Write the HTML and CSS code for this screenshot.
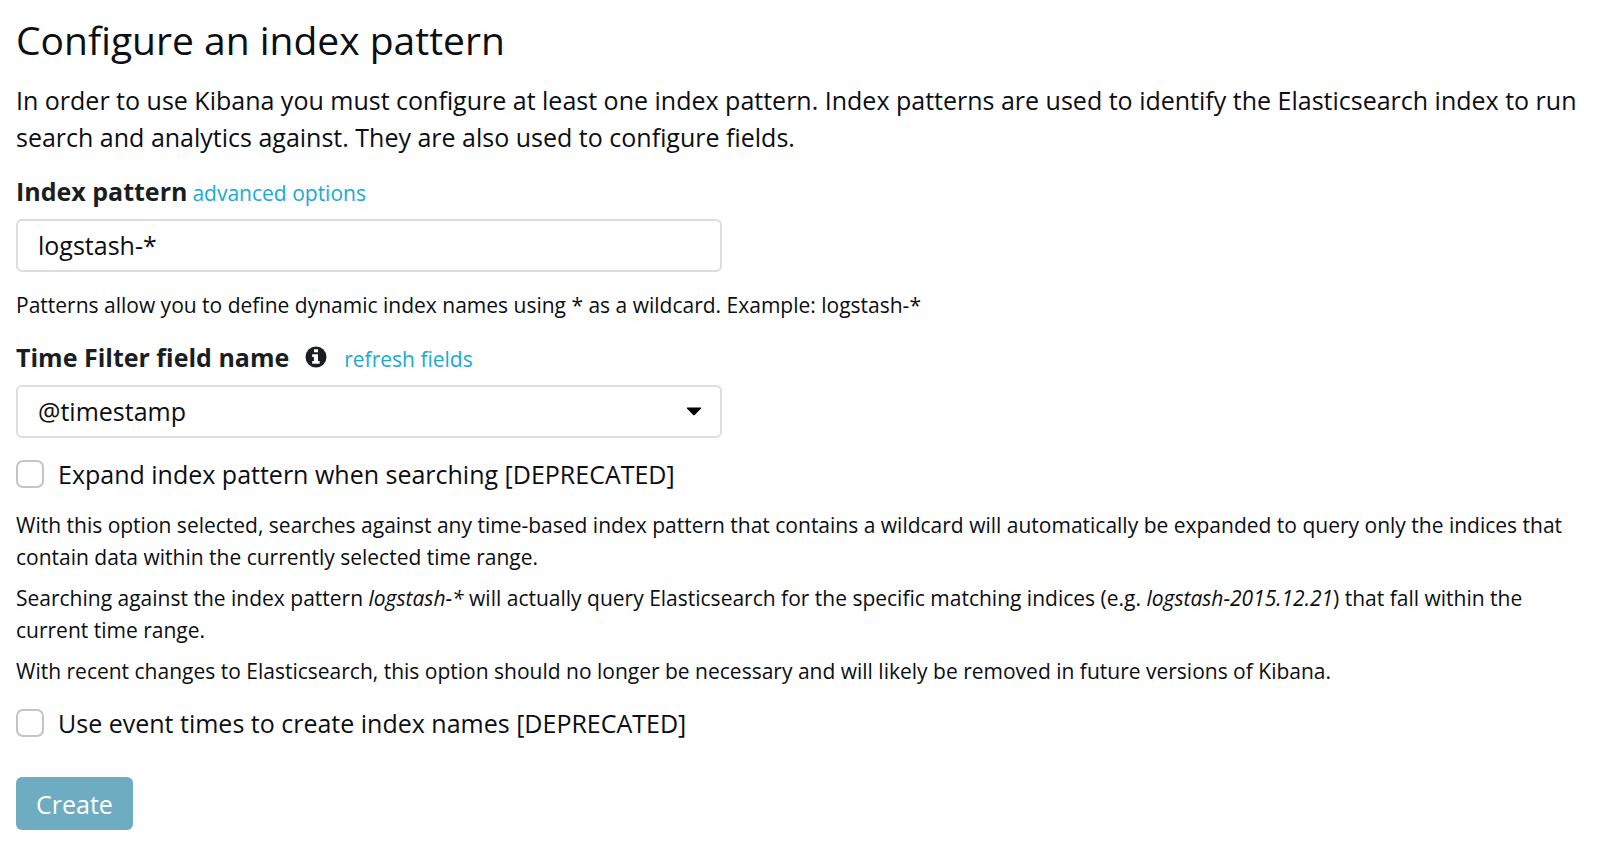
FILE: index.html
```html
<!DOCTYPE html>
<html lang="en">
<head>
<meta charset="utf-8">
<title>Configure an index pattern</title>
<link rel="stylesheet" href="styles.css">
</head>
<body>
<main class="page">
  <h1 class="title">Configure an index pattern</h1>
  <p class="intro">In order to use Kibana you must configure at least one index pattern. Index patterns are used to identify the Elasticsearch index to run search and analytics against. They are also used to configure fields.</p>
  <form class="form">
    <div class="label-row">
      <label class="label" for="pattern">Index pattern</label>
      <a class="link" href="#">advanced options</a>
    </div>
    <input class="control" id="pattern" type="text" value="logstash-*">
    <p class="help help-pattern">Patterns allow you to define dynamic index names using * as a wildcard. Example: logstash-*</p>
    <div class="label-row">
      <label class="label" for="time-field">Time Filter field name</label>
      <svg class="info" viewBox="0 0 22 22" aria-hidden="true"><circle cx="11" cy="11" r="10.5" fill="#191e23"/><path d="M9 3.2h4v3H9zM7.2 8.2H13v6.8h1.6v2.8H7.2V15h1.7v-4.1H7.2z" fill="#fff"/></svg>
      <a class="link" href="#">refresh fields</a>
    </div>
    <div class="select-wrap">
      <select class="control" id="time-field"><option>@timestamp</option></select>
      <svg class="caret" viewBox="0 0 16 9" aria-hidden="true"><path d="M1 .5h14v1L8.8 8q-.8.7-1.6 0L1 1.5z" fill="#000"/></svg>
    </div>
    <label class="check check-expand"><input class="box" type="checkbox"> Expand index pattern when searching [DEPRECATED]</label>
    <p class="help">With this option selected, searches against any time-based index pattern that contains a wildcard will automatically be expanded to query only the indices that contain data within the currently selected time range.</p>
    <p class="help">Searching against the index pattern <em>logstash-*</em> will actually query Elasticsearch for the specific matching indices (e.g. <em>logstash-2015.12.21</em>) that fall within the current time range.</p>
    <p class="help">With recent changes to Elasticsearch, this option should no longer be necessary and will likely be removed in future versions of Kibana.</p>
    <label class="check check-event"><input class="box" type="checkbox"> Use event times to create index names [DEPRECATED]</label>
    <button class="create" type="button">Create</button>
  </form>
</main>
</body>
</html>
```
FILE: styles.css
```css
* { box-sizing: border-box; }
body { margin: 0; background: #fff; color: #0b0e12; font-family: "Open Sans", sans-serif; font-size: 25px; }
.page { padding: 13px 16px 19px; }
.title { margin: 0 0 15px; font-size: 39px; font-weight: 400; line-height: 54px; }
.intro { margin: 0 0 17px; line-height: 37px; }
.form { display: flex; flex-direction: column; align-items: flex-start; }
.label-row { display: flex; align-items: baseline; height: 36px; margin-bottom: 10px; line-height: 36px; }
.label { font-size: 25px; font-weight: 700; color: #191e23; }
.link { margin-left: 5px; font-size: 21px; color: #1ba9d0; text-decoration: none; }
.control { display: block; width: 100%; max-width: 706px; height: 53px; padding: 0 20px 2px; border: 2px solid #ddd; border-radius: 6px; background: #fff; color: inherit; font: inherit; appearance: none; }
.select-wrap { position: relative; width: 100%; max-width: 706px; }
.caret { position: absolute; right: 20px; top: 22px; width: 16px; height: 9px; pointer-events: none; }
.info { align-self: center; width: 22px; height: 22px; margin: 0 12px 0 16px; }
.help { margin: 0 0 9px; font-size: 21px; line-height: 32px; }
.help-pattern { margin: 17px 0 18px; }
.check { display: flex; align-items: center; gap: 14px; height: 36px; }
.box { width: 28px; height: 28px; margin: 0; border: 2px solid #c4c4c4; border-radius: 7px; background: #fff; appearance: none; }
.check-expand { margin: 18px 0 17px; }
.check-event { margin: 9px 0 36px; }
.create { height: 53px; padding: 0 20px; border: 0; border-radius: 6px; background: #6eadc1; color: #fff; font: inherit; font-weight: 500; }
```
